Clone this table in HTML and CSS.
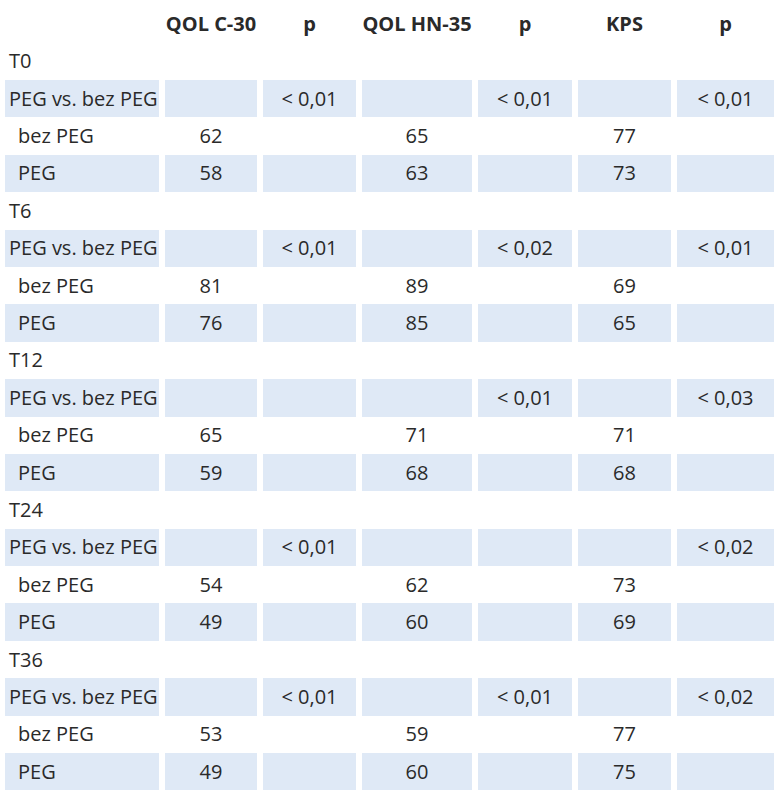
FILE: index.html
```html
<!DOCTYPE html>
<html>
<head>
<meta charset="utf-8">
<link rel="stylesheet" href="styles.css">
</head>
<body>
<div class="table">
  <div class="h"></div><div class="h">QOL C-30</div><div class="h">p</div><div class="h">QOL HN-35</div><div class="h">p</div><div class="h">KPS</div><div class="h">p</div>

  <div class="t">T0</div><div class="e"></div><div class="e"></div><div class="e"></div><div class="e"></div><div class="e"></div><div class="e"></div>
  <div class="s l">PEG vs. bez PEG</div><div class="s"></div><div class="s">&lt; 0,01</div><div class="s"></div><div class="s">&lt; 0,01</div><div class="s"></div><div class="s">&lt; 0,01</div>
  <div class="c i">bez PEG</div><div class="c">62</div><div class="c"></div><div class="c">65</div><div class="c"></div><div class="c">77</div><div class="c"></div>
  <div class="s i">PEG</div><div class="s">58</div><div class="s"></div><div class="s">63</div><div class="s"></div><div class="s">73</div><div class="s"></div>

  <div class="t">T6</div><div class="e"></div><div class="e"></div><div class="e"></div><div class="e"></div><div class="e"></div><div class="e"></div>
  <div class="s l">PEG vs. bez PEG</div><div class="s"></div><div class="s">&lt; 0,01</div><div class="s"></div><div class="s">&lt; 0,02</div><div class="s"></div><div class="s">&lt; 0,01</div>
  <div class="c i">bez PEG</div><div class="c">81</div><div class="c"></div><div class="c">89</div><div class="c"></div><div class="c">69</div><div class="c"></div>
  <div class="s i">PEG</div><div class="s">76</div><div class="s"></div><div class="s">85</div><div class="s"></div><div class="s">65</div><div class="s"></div>

  <div class="t">T12</div><div class="e"></div><div class="e"></div><div class="e"></div><div class="e"></div><div class="e"></div><div class="e"></div>
  <div class="s l">PEG vs. bez PEG</div><div class="s"></div><div class="s"></div><div class="s"></div><div class="s">&lt; 0,01</div><div class="s"></div><div class="s">&lt; 0,03</div>
  <div class="c i">bez PEG</div><div class="c">65</div><div class="c"></div><div class="c">71</div><div class="c"></div><div class="c">71</div><div class="c"></div>
  <div class="s i">PEG</div><div class="s">59</div><div class="s"></div><div class="s">68</div><div class="s"></div><div class="s">68</div><div class="s"></div>

  <div class="t">T24</div><div class="e"></div><div class="e"></div><div class="e"></div><div class="e"></div><div class="e"></div><div class="e"></div>
  <div class="s l">PEG vs. bez PEG</div><div class="s"></div><div class="s">&lt; 0,01</div><div class="s"></div><div class="s"></div><div class="s"></div><div class="s">&lt; 0,02</div>
  <div class="c i">bez PEG</div><div class="c">54</div><div class="c"></div><div class="c">62</div><div class="c"></div><div class="c">73</div><div class="c"></div>
  <div class="s i">PEG</div><div class="s">49</div><div class="s"></div><div class="s">60</div><div class="s"></div><div class="s">69</div><div class="s"></div>

  <div class="t">T36</div><div class="e"></div><div class="e"></div><div class="e"></div><div class="e"></div><div class="e"></div><div class="e"></div>
  <div class="s l">PEG vs. bez PEG</div><div class="s"></div><div class="s">&lt; 0,01</div><div class="s"></div><div class="s">&lt; 0,01</div><div class="s"></div><div class="s">&lt; 0,02</div>
  <div class="c i">bez PEG</div><div class="c">53</div><div class="c"></div><div class="c">59</div><div class="c"></div><div class="c">77</div><div class="c"></div>
  <div class="s i">PEG</div><div class="s">49</div><div class="s"></div><div class="s">60</div><div class="s"></div><div class="s">75</div><div class="s"></div>
</div>
</body>
</html>
```

FILE: styles.css
```css
html, body {
  margin: 0;
  padding: 0;
  background: #ffffff;
}
body {
  font-family: "Open Sans", "Liberation Sans", sans-serif;
  font-size: 20px;
  color: #2a2a2a;
}
.table {
  display: grid;
  grid-template-columns: 154px 92px 93px 110px 94px 93px 97px;
  grid-template-rows: 42.6px;
  grid-auto-rows: 37.4px;
  column-gap: 6px;
  margin-left: 5px;
  width: 769px;
}
.table > div {
  display: flex;
  align-items: center;
  justify-content: center;
  white-space: nowrap;
  line-height: 1;
}
.table > .h {
  font-weight: 700;
  align-items: flex-start;
  padding-top: 14px;
}
.table > .s {
  background: #dfe9f6;
}
.table > .t,
.table > .l {
  justify-content: flex-start;
  padding-left: 4px;
}
.table > .i {
  justify-content: flex-start;
  padding-left: 13px;
}
```
